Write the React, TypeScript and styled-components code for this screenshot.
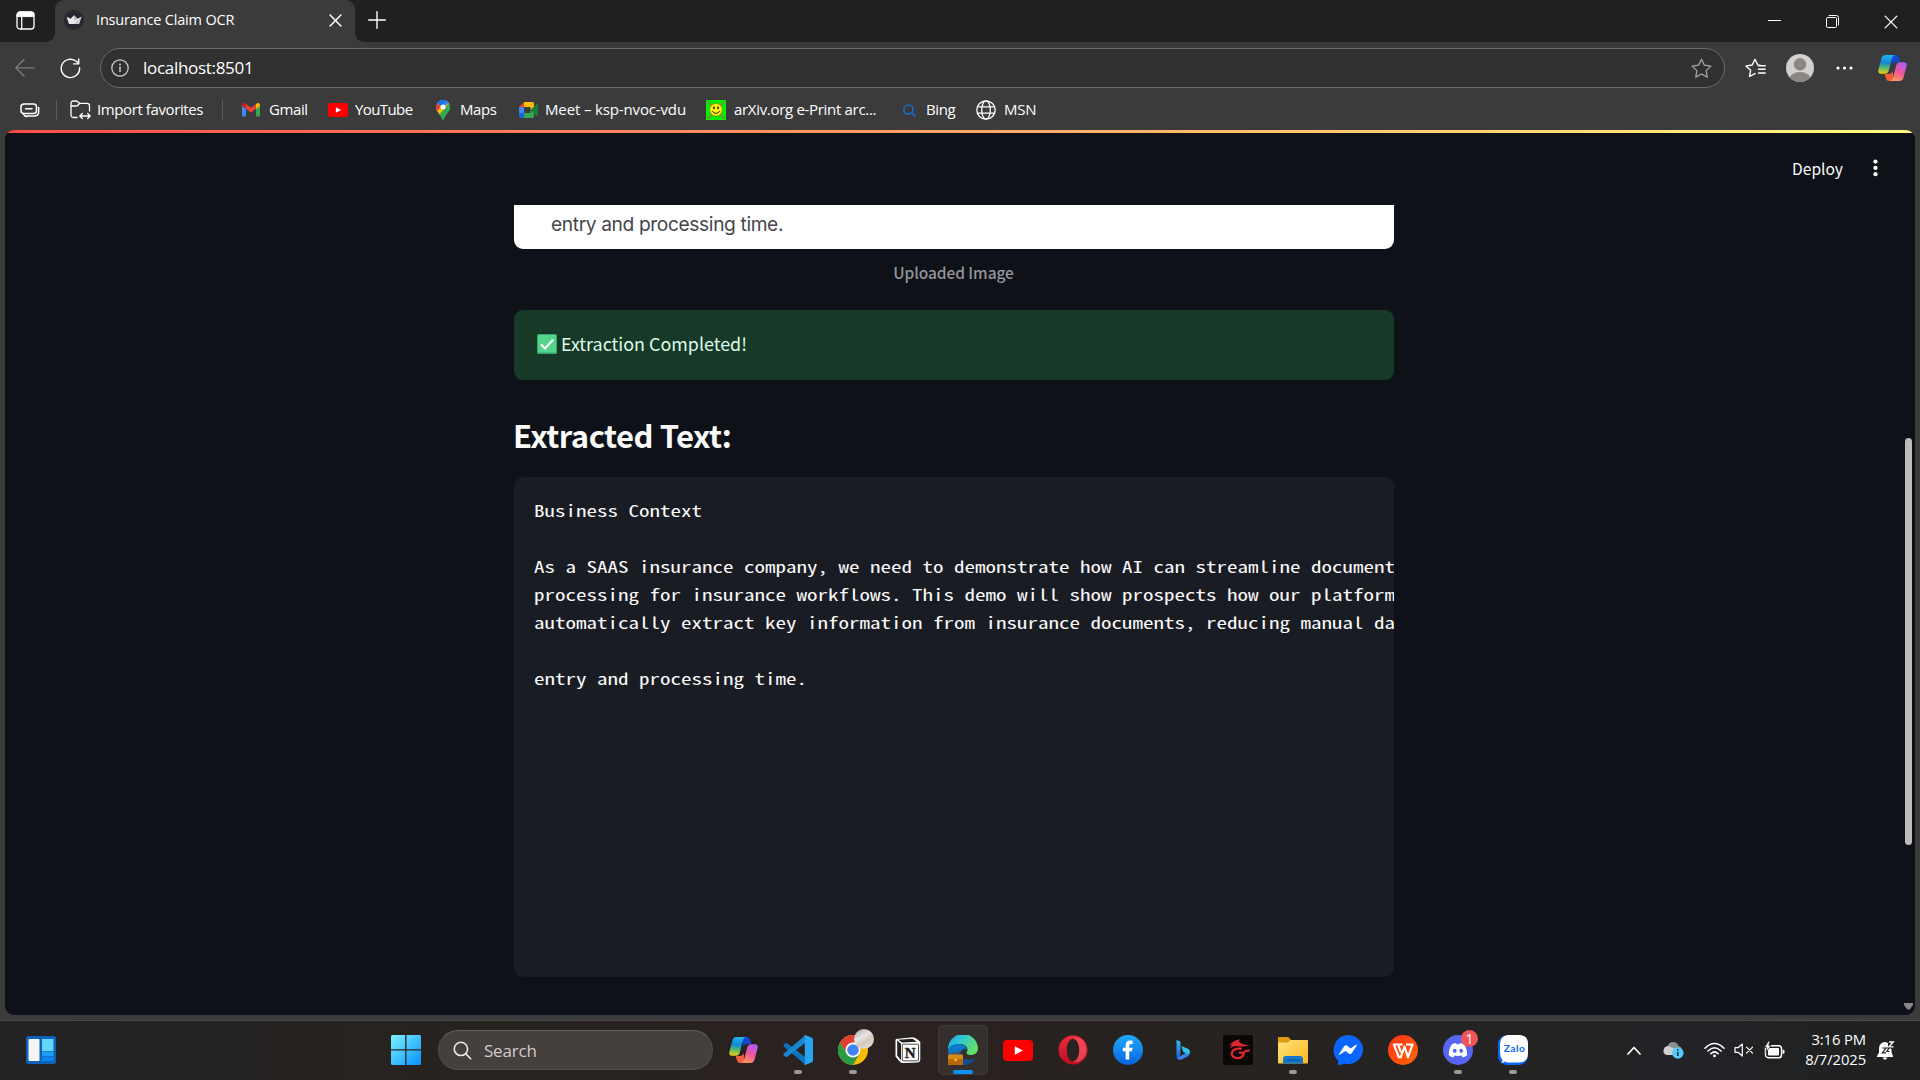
import React from 'react';
import styled, { createGlobalStyle, css } from 'styled-components';

const ui = `"Open Sans", "Noto Sans", sans-serif`;
const sourceSans = `"Noto Sans CJK JP", "Open Sans", sans-serif`;
const sourceCode = `"Noto Sans Mono CJK JP", "DejaVu Sans Mono", monospace`;

const Global = createGlobalStyle`
  * { box-sizing: border-box; }
  html, body { margin: 0; padding: 0; background: #3b3b3b; overflow: hidden; }
  svg { display: block; flex: none; }
`;

const Screen = styled.div`
  width: 1920px;
  height: 1080px;
  display: flex;
  flex-direction: column;
  background: #3b3b3b;
  color: #fff;
  font-family: ${ui};
  overflow: hidden;
`;

/* ---------- text ---------- */
const Label = styled.span<{ $size?: number; $track?: number; $color?: string }>`
  font-size: ${p => p.$size ?? 15}px;
  letter-spacing: ${p => p.$track ?? 0}px;
  color: ${p => p.$color ?? '#fff'};
  line-height: 20px;
  white-space: nowrap;
`;

/* ---------- tab strip ---------- */
const TabStrip = styled.div`
  height: 42px;
  display: flex;
  flex: none;
`;
const StripLeft = styled.div`
  width: 55px;
  background: #202020;
  border-bottom-right-radius: 9px;
  padding: 11px 0 0 15.5px;
`;
const TabSlot = styled.div`
  width: 300px;
  background: linear-gradient(#202020 50%, #3b3b3b 50%);
`;
const Tab = styled.div`
  height: 42px;
  background: #3b3b3b;
  border-radius: 9px 9px 0 0;
  display: flex;
  align-items: center;
  padding: 0 13px 2px 9px;
`;
const TabTitle = styled(Label)`
  margin-left: 12px;
  flex: 1;
`;
const StripRight = styled.div`
  flex: 1;
  background: #202020;
  border-bottom-left-radius: 9px;
  display: flex;
  justify-content: space-between;
  padding: 11px 22px 0 13px;
`;
const WindowControls = styled.div`
  display: flex;
  gap: 45px;
  padding-top: 4px;
`;

/* ---------- toolbar ---------- */
const Toolbar = styled.div`
  height: 53px;
  flex: none;
  display: flex;
  align-items: center;
  padding: 0 12px 1px 15px;
`;
const NavIcons = styled.div`
  display: flex;
  gap: 24.5px;
  width: 85px;
`;
const AddressBar = styled.div`
  width: 1625px;
  height: 40px;
  border: 1px solid #6b6b6b;
  border-radius: 20px;
  background: #313131;
  display: flex;
  align-items: center;
  padding: 0 12px 0 10px;
`;
const Url = styled(Label)`
  flex: 1;
  margin-left: 14px;
`;
const ToolIcons = styled.div`
  display: flex;
  align-items: center;
  padding-left: 19.5px;
`;
const ToolSlot = styled.div<{ $w: number }>`
  width: ${p => p.$w}px;
`;

/* ---------- favorites ---------- */
const Favorites = styled.div`
  height: 35px;
  flex: none;
  display: flex;
  align-items: center;
  padding: 0 0 5px 20px;
`;
const Favorite = styled.div<{ $w: number; $gap: number }>`
  width: ${p => p.$w}px;
  display: flex;
  align-items: center;
  gap: ${p => p.$gap}px;
  flex: none;

  ${Label} {
    padding-bottom: 2px;
    line-height: 18px;
  }
`;
const Divider = styled.div<{ $after: number }>`
  width: 1px;
  height: 20px;
  background: #5c5c5c;
  margin-right: ${p => p.$after}px;
`;

/* ---------- page ---------- */
const PageFrame = styled.div`
  height: 891px;
  flex: none;
  padding: 0 5px 6px;
  border-bottom: 1px solid #4a4a4a;
`;
const Page = styled.div`
  height: 885px;
  background: #0e1117;
  border-radius: 9px;
  overflow: hidden;
  display: flex;
  flex-direction: column;
  font-family: ${sourceSans};
`;
const Decoration = styled.div`
  height: 3px;
  flex: none;
  background: linear-gradient(90deg, #ff4b4b, #fffd80);
`;
const PageHeader = styled.div`
  height: 72px;
  flex: none;
  display: flex;
  justify-content: flex-end;
  align-items: center;
  gap: 30px;
  padding: 0 37px 2px 0;
`;
const Deploy = styled.span`
  font-size: 15.6px;
  line-height: 20px;
  color: #fafafa;
`;
const PageBody = styled.div`
  flex: 1;
  display: flex;
  min-height: 0;
`;
const Column = styled.main`
  width: 880px;
  margin-left: 509px;
  display: flex;
  flex-direction: column;
`;
const ImageCard = styled.div`
  height: 44px;
  flex: none;
  background: #fff;
  border-radius: 0 0 9px 9px;
  padding: 6px 0 0 37px;
  font: 19.2px/26px Inter, sans-serif;
  letter-spacing: -0.38px;
  color: #44464b;
`;
const Caption = styled.div`
  margin-top: 10px;
  padding-right: 1px;
  text-align: center;
  font-size: 15.5px;
  line-height: 26px;
  font-weight: 500;
  letter-spacing: -0.06px;
  color: #94969a;
`;
const Success = styled.div`
  margin-top: 25px;
  height: 70px;
  flex: none;
  border-radius: 9px;
  background: #173928;
  color: #dffde9;
  display: flex;
  align-items: center;
  gap: 4px;
  padding: 0 23px 2px;
  font-size: 17.9px;
  line-height: 24px;

  span { padding-bottom: 2px; }
`;
const Heading = styled.h3`
  margin: 34px 0 0 -1px;
  font-size: 31px;
  line-height: 42px;
  letter-spacing: -0.48px;
  font-weight: 700;
  color: #fafafa;
`;
const CodeBlock = styled.pre`
  margin: 21px 0 0;
  height: 500px;
  flex: none;
  padding: 19px 0 0 19.5px;
  border-radius: 9px;
  background: #1a1c24;
  color: #fafafa;
  overflow: hidden;
`;
const Code = styled.code`
  display: block;
  width: 660px;
  font-family: ${sourceCode};
  font-size: 16px;
  line-height: 28px;
  transform: scaleX(1.3125);
  transform-origin: 0 0;
`;
const ScrollRail = styled.div`
  margin-left: auto;
  width: 11px;
  display: flex;
  flex-direction: column;
  justify-content: space-between;
  padding: 233px 0 5px;
`;
const ScrollThumb = styled.div`
  margin-left: 1px;
  width: 7px;
  height: 407px;
  border-radius: 4px;
  background: #bbbbbb;
`;

/* ---------- taskbar ---------- */
const Taskbar = styled.div`
  height: 59px;
  flex: none;
  display: flex;
  align-items: center;
  padding-bottom: 1px;
  background: linear-gradient(90deg, #222223 0, #27231f 25%, #2a2220 45%, #27221f 60%, #242322 75%, #212326 88%, #202020 100%);
`;
const WidgetSlot = styled.div`
  width: 391px;
  padding-left: 26px;
`;
const SearchBox = styled.div`
  margin-left: 17px;
  width: 275px;
  height: 40px;
  border-radius: 20px;
  background: #45403d;
  border: 1px solid #514c49;
  border-top-color: #65605d;
  display: flex;
  align-items: center;
  gap: 12px;
  padding-left: 14px;

  ${Label} { padding-top: 1px; }
`;
const AppRow = styled.div`
  display: flex;
  gap: 5px;
  margin-left: 5px;
`;
const AppCell = styled.div<{ $active?: boolean }>`
  position: relative;
  width: 50px;
  height: 50px;
  border-radius: 5px;
  display: flex;
  align-items: center;
  justify-content: center;
  ${p => p.$active && css`
    background: #35302e;
    box-shadow: inset 0 0 0 1px #403b38;
  `}
`;
const Indicator = styled.i<{ $active?: boolean }>`
  position: absolute;
  bottom: 1px;
  left: 50%;
  transform: translateX(-50%);
  width: ${p => (p.$active ? 20 : 8)}px;
  height: 4px;
  border-radius: 2px;
  background: ${p => (p.$active ? '#0a91ff' : '#9c9997')};
`;
const Badge = styled.span<{ $photo?: boolean }>`
  position: absolute;
  top: ${p => (p.$photo ? 4 : 5)}px;
  right: ${p => (p.$photo ? 4 : 5)}px;
  width: ${p => (p.$photo ? 20 : 17)}px;
  height: ${p => (p.$photo ? 20 : 17)}px;
  border-radius: 50%;
  background: ${p => (p.$photo ? 'linear-gradient(150deg,#9fa5aa,#e8e6e3 40%,#d3c8bb 60%,#e2e5e7)' : '#ee5458')};
  font-size: 14px;
  line-height: 17px;
  text-align: center;
`;
const Tray = styled.div`
  margin-left: auto;
  display: flex;
  align-items: center;
  padding-right: 25px;
`;
const TraySlot = styled.div<{ $w: number }>`
  width: ${p => p.$w}px;
  display: flex;
  justify-content: center;
`;
const Clock = styled.div`
  width: 76px;
  display: flex;
  flex-direction: column;
  align-items: flex-end;
  margin-right: 11px;
  padding-bottom: 2px;
`;

/* ---------- icons ---------- */
const stroke = { fill: 'none', stroke: '#fff', strokeLinecap: 'round' as const, strokeLinejoin: 'round' as const };

const TabActions = () => (
  <svg width="19" height="19" viewBox="0 0 19 19" {...stroke} strokeWidth="1.3">
    <rect x="1" y="1" width="17" height="17" rx="3" /><path d="M1 5.200V4Q1 1 4 1h11q3 0 3 3v1.200Z" fill="#fff" strokeWidth="1" /><path d="M5.700 5v13" />
  </svg>
);
const Crown = () => (
  <svg width="20" height="20" viewBox="0 0 20 20">
    <circle cx="10" cy="10" r="10" fill="#262730" />
    <path d="M2.600 6.800 6.600 8.800 10 5.200l3.400 3.600 4-2-2.400 7.200H5Z" fill="#e9e9e9" />
    <path d="m10 5.200 3.400 3.600L10 11Z" fill="#bdbdbd" /><path d="m17.400 6.800-2.400 7.200h-5Z" fill="#cfcfcf" />
  </svg>
);
const Cross = ({ s, w = 1.4 }: { s: number; w?: number }) => (
  <svg width={s} height={s} viewBox="0 0 12 12" {...stroke} strokeWidth={w}><path d="m1 1 10 10M11 1 1 11" /></svg>
);
const Plus = () => <svg width="18" height="18" viewBox="0 0 18 18" {...stroke} strokeWidth="1.4"><path d="M9 0.7v16.6M.7 9h16.6" /></svg>;
const Minimize = () => <svg width="13" height="13" viewBox="0 0 13 13"><path d="M0 5.500h13" stroke="#fff" strokeWidth="1" /></svg>;
const Restore = () => (
  <svg width="13" height="13" viewBox="0 0 13 13" {...stroke} strokeWidth="1"><rect x=".5" y="2.500" width="10" height="10" rx="1" /><path d="M3 .5h7.500q2 0 2 2V10" /></svg>
);
const Back = () => <svg width="20" height="20" viewBox="0 0 20 20" {...stroke} stroke="#7d7d7d" strokeWidth="1.3"><path d="M19.3 9.8H.8M9 1.5.8 9.8 9 18" /></svg>;
const Reload = () => (
  <svg width="21" height="21" viewBox="0 0 21 21" {...stroke} strokeWidth="1.4"><path d="M19.6 9.800a9.200 9.200 0 1 1-3-6.200l2 1.800M18.700 1v4.900h-5" /></svg>
);
const Info = () => (
  <svg width="18" height="18" viewBox="0 0 18 18" {...stroke} stroke="#d0d0d0" strokeWidth="1.2"><circle cx="9" cy="9" r="8.2" /><path d="M9 8.3v4.3" strokeWidth="1.5" /><circle cx="9" cy="5.6" r=".4" /></svg>
);
const starPath = 'm10 1.2 2.7 5.6 6.2.9-4.5 4.3 1.1 6.2L10 15.3l-5.5 2.9 1.1-6.2L1.1 7.7l6.2-.9Z';
const Star = () => <svg width="21" height="21" viewBox="0 0 20 20" {...stroke} stroke="#a5a5a5" strokeWidth="1.2"><path d={starPath} /></svg>;
const FavoritesIcon = () => (
  <svg width="21" height="20" viewBox="0 0 21 20" {...stroke} strokeWidth="1.400">
    <path d="m10 15.600-5.500 2.900 1.100-6.200L1 7.900l6.200-.9L10 1.300 12.800 7l2.700.4M13.500 7.700h6.700M13.500 11.300h6.700M13.500 15h6.700" />
  </svg>
);
const Avatar = () => (
  <svg width="28" height="28" viewBox="0 0 28 28"><defs><clipPath id="av"><circle cx="14" cy="14" r="14" /></clipPath></defs>
    <g clipPath="url(#av)"><rect width="28" height="28" fill="#d2d0ce" /><circle cx="14" cy="10.3" r="6.2" fill="#8a8683" /><ellipse cx="14" cy="26" rx="11" ry="8" fill="#8a8683" /></g></svg>
);
const Dots = () => <svg width="17" height="4" viewBox="0 0 17 4" fill="#fff"><circle cx="2" cy="2" r="1.6" /><circle cx="8.5" cy="2" r="1.6" /><circle cx="15" cy="2" r="1.6" /></svg>;
const Copilot = ({ id }: { id: string }) => (
  <svg width="29" height="26" viewBox="0 0 29 26">
    <defs>
      <linearGradient id={id + 'a'} x1=".4" y1="0" x2=".3" y2="1"><stop stopColor="#22b3f0" /><stop offset=".4" stopColor="#1387d8" /><stop offset=".65" stopColor="#4bb774" /><stop offset="1" stopColor="#f4cf12" /></linearGradient>
      <linearGradient id={id + 'b'} x1=".7" y1="0" x2=".3" y2="1"><stop stopColor="#b05bf5" /><stop offset=".5" stopColor="#ee559c" /><stop offset="1" stopColor="#fb9a5c" /></linearGradient>
    </defs>
    <path d="M13 0h5q2.300 0 3 2.500L22.300 7H18q-2.500 0-3.500 3Z" fill="#1647d0" />
    <path d="M16 26h-5q-2.300 0-3-2.500L6.700 19H11q2.500 0 3.500-3Z" fill="#f2603c" />
    <path d="M7.500 0H17q-2.300.3-3 3l-3.200 12.500q-.9 3.300-4 3.300H3.200Q-.7 18.800.5 14.500L3.500 3.200Q4.500 0 7.500 0Z" fill={`url(#${id}a)`} />
    <path d="M21.500 26H12q2.300-.3 3-3l3.200-12.500q.9-3.300 4-3.300h3.600q3.900 0 2.700 4.300l-3 11.300Q24.500 26 21.500 26Z" fill={`url(#${id}b)`} />
  </svg>
);
const Stack = () => (
  <svg width="20" height="15" viewBox="0 0 20 15" {...stroke} strokeWidth="1.5"><rect x="1" y="1" width="15.500" height="9.500" rx="3" /><path d="M5.500 5.800h6.500M18.700 4.500v4q0 4.600-4.600 4.600H5M3.500 11.200Q4.500 13.500 7 13.500" /></svg>
);
const ImportFolder = () => (
  <svg width="21" height="20" viewBox="0 0 21 20" {...stroke} strokeWidth="1.3"><path d="M7 17.500H3.500Q1 17.500 1 15V3.500Q1 1 3.500 1H6q1 0 1.700.7L9.500 3.300H17q2.500 0 2.500 2.500V11M1 6h5.300q1 0 1.700-.8L9.700 3.300M10 16h10M12.300 13.500 9.800 16l2.500 2.500M17.700 13.500l2.500 2.500-2.500 2.500" /></svg>
);
const Gmail = () => (
  <svg width="18" height="14" viewBox="0 0 18 14"><path d="M0 2.500 4 5.500V13.500H1.300Q0 13.500 0 12.200Z" fill="#4285f4" /><path d="M18 2.500 14 5.500v8h2.700q1.300 0 1.300-1.300Z" fill="#34a853" /><path d="M4 1 9 4.800 14 1v4.800L9 9.600 4 5.800Z" fill="#ea4335" /><path d="M0 3V2Q.4-.8 3 .3L4 1v5Z" fill="#c5221f" /><path d="M18 3V2Q17.600-.8 15 .3L14 1v5Z" fill="#fbbc04" /></svg>
);
const YouTube = ({ w }: { w: number }) => (
  <svg width={w} height={w * 0.7} viewBox="0 0 30 21"><rect width="30" height="21" rx="4" fill="#f00" /><path d="m11.800 6.200 8 4.300-8 4.300Z" fill="#fff" /></svg>
);
const MapsPin = () => (
  <svg width="14" height="20" viewBox="0 0 14 20"><defs><clipPath id="pin"><path d="M7 0a7 7 0 0 1 7 7c0 5-4.500 6.500-6.200 12.300q-.8 1.400-1.600 0C4.500 13.500 0 12 0 7a7 7 0 0 1 7-7Z" /></clipPath></defs>
    <g clipPath="url(#pin)"><rect width="14" height="20" fill="#34a853" /><path d="M0 0h14L4 12Z" fill="#4285f4" /><path d="M11 0h3v4L3 17-2 10Z" fill="#fbbc04" /><path d="M9 0h5v2L8 7 4 4Z" fill="#4285f4" /><path d="M0 2.500 5 6.500 1.500 11-2 8Z" fill="#ea4335" /><path d="M14 2v18H5l-2-5Z" fill="#34a853" /><path d="M1 2 4 0h7.500L5 6.500Z" fill="#1a73e8" /></g><circle cx="7" cy="7" r="2.500" fill="#fff" /></svg>
);
const Meet = () => (
  <svg width="19" height="16" viewBox="0 0 19 16"><path d="M0 5 5 0v5Z" fill="#ea4335" /><path d="M5 0h8.500q1.500 0 1.500 1.500V5l-3.500 3V5H5Z" fill="#fbbc04" /><path d="M0 5h5v6H0Z" fill="#4285f4" /><path d="M0 11h5v5H1.500Q0 16 0 14.500Z" fill="#1967d2" /><path d="M5 11h6.500V8L15 5v9.500q0 1.500-1.500 1.500H5Z" fill="#34a853" /><path d="m11.500 8 6-5.500Q19 1.500 19 3v10q0 1.500-1.500.500Z" fill="#188038" /></svg>
);
const Arxiv = () => (
  <svg width="20" height="20" viewBox="0 0 20 20"><rect width="20" height="20" fill="#00f000" /><path d="m1.500 1.500 17 17M18.500 1.500l-17 17" stroke="#8d7a4a" strokeWidth="2.200" strokeDasharray="2.500 1" /><circle cx="10" cy="9.800" r="6.300" fill="#ffee10" stroke="#8a7a00" strokeWidth=".7" /><ellipse cx="8" cy="7.800" rx=".8" ry="1.400" /><ellipse cx="12" cy="7.800" rx=".8" ry="1.400" /><path d="M6.200 11.200q3.800 4.400 7.600 0" fill="none" stroke="#222" /></svg>
);
const Lens = ({ s, c, w }: { s: number; c: string; w: number }) => (
  <svg width={s} height={s} viewBox="0 0 18 18" {...stroke} stroke={c} strokeWidth={w}><circle cx="7.500" cy="7.500" r="6.300" /><path d="m12.200 12.200 4.600 4.600" /></svg>
);
const Globe = () => (
  <svg width="20" height="20" viewBox="0 0 20 20" {...stroke} strokeWidth="1.300"><circle cx="10" cy="10" r="9.200" /><ellipse cx="10" cy="10" rx="4.300" ry="9.200" /><path d="M1.500 6.800h17M1.500 13.200h17" /></svg>
);
const Kebab = () => <svg width="5" height="18" viewBox="0 0 5 18" fill="#fafafa"><circle cx="2.500" cy="2.600" r="2.150" /><circle cx="2.500" cy="8.900" r="2.150" /><circle cx="2.500" cy="15.200" r="2.150" /></svg>;
const CheckEmoji = () => (
  <svg width="20" height="20" viewBox="0 0 20 20"><rect width="20" height="20" rx="1.500" fill="#3aa66c" /><rect x="1" y="1" width="18" height="17.500" rx="1" fill="#55d48b" /><path d="m4 10.200 4 4.200 8-8.600" fill="none" stroke="#fff" strokeWidth="2.200" /></svg>
);
const ScrollDown = () => <svg width="9" height="7" viewBox="0 0 9 7" fill="#87888b"><path d="M0 0h9v2L5.700 6.500H3.300L0 2Z" /></svg>;

const Widgets = () => (
  <svg width="30" height="28" viewBox="0 0 30 28"><rect width="30" height="28" rx="2.500" fill="#0f62b3" /><rect x="2.500" y="3" width="11" height="22" rx="1" fill="#f4f4f4" /><rect x="16" y="3" width="11.500" height="12" fill="#62d5fb" /><rect x="16" y="15.500" width="11.500" height="4.500" fill="#1c9ef5" /><rect x="16" y="20.500" width="11.500" height="4.500" fill="#0a84f0" /></svg>
);
const Windows = () => (
  <svg width="30" height="30" viewBox="0 0 30 30"><defs><linearGradient id="win" x1="0" y1="0" x2="30" y2="30" gradientUnits="userSpaceOnUse"><stop stopColor="#7df3ff" /><stop offset="1" stopColor="#0690ff" /></linearGradient></defs><path d="M1.500 0h12.700v14.200H0V1.500Q0 0 1.500 0ZM15.500 0h13Q30 0 30 1.500v12.700H15.500ZM0 15.500h14.200V30H1.500Q0 30 0 28.500ZM15.500 15.500H30v13q0 1.500-1.500 1.500h-13Z" fill="url(#win)" /></svg>
);
const VsCode = () => (
  <svg width="30" height="30" viewBox="0 0 30 30"><path d="M.6 9.800 2.500 8.200q.9-.6 1.700 0L22 22v7.500L.8 11.600Q0 10.700.6 9.800Z" fill="#0b74bd" /><path d="M.6 20.200l1.900 1.600q.9.600 1.700 0L22 8V.500L.8 18.400q-.8.900-.2 1.800Z" fill="#1788cf" /><path d="M22 0l7 2.800q1 .5 1 1.600v21.200q0 1.100-1 1.600L22 30q-1-.3-.2-1.200V1.200Q21-.1 22 0Z" fill="#27a4f2" /></svg>
);
const Chrome = () => (
  <svg width="30" height="30" viewBox="0 0 30 30"><circle cx="15" cy="15" r="15" fill="#fbbc05" /><path d="M2 7.500A15 15 0 0 1 28 7.500H15L9 18.500Z" fill="#e0402f" /><path d="M2 7.500A15 15 0 0 0 15 30l6.500-11.300L9 18.700Z" fill="#2b9a47" /><circle cx="15" cy="15" r="7.500" fill="#fff" /><circle cx="15" cy="15" r="5.800" fill="#4183f2" /></svg>
);
const NotionN = styled.text`
  font: bold 15px "Liberation Serif", serif;
`;
const Notion = () => (
  <svg width="26" height="26" viewBox="0 0 26 26"><path d="M1 2.500 17.500.8l3 .8 4.300 3.200V23q0 1.800-2 2L7.500 25.500q-1.500.1-2.300-.9L1 19.500Z" fill="#fff" stroke="#fff" strokeLinejoin="round" /><path d="M2.200 3.500 6 6.800v16.500L2.200 18.600ZM3.300 2.800 17.500 1.800l4.300 2.900L7 5.500Z" fill="#24211f" /><rect x="7.300" y="7.200" width="16.200" height="16.600" rx=".8" fill="#fff" stroke="#24211f" strokeWidth=".8" /><NotionN x="9.700" y="20.800" fill="#1d1b1a" stroke="#1d1b1a" strokeWidth=".4">N</NotionN></svg>
);
const Edge = () => (
  <svg width="30" height="30" viewBox="0 0 30 30"><defs><linearGradient id="eg" x1="0" y1="0" x2="1" y2=".5"><stop stopColor="#1ea6e4" /><stop offset=".45" stopColor="#2cc8d2" /><stop offset="1" stopColor="#62e06c" /></linearGradient></defs>
    <path d="M0 15A15 15 0 0 1 30 13c0 5-3.500 7-7.500 7-3 0-4.800-1.200-3.500-3.200C21 13 17 9 12 9 6 9 1 11.500 0 15Z" fill="url(#eg)" /><path d="M0 15c1-4 5.500-6.500 11-6 4.500.4 7.500 3 7.800 6-1.500-1.500-4-1.700-5.600.7-3 4.500 1.800 13.500 11 9.800A15 15 0 0 1 0 15Z" fill="#0d78cc" /><path d="M13.200 15.700c-2.500 5 2.500 12.500 14.300 7.500A15 15 0 0 1 14 30c-5-3-5-11-.8-14.300Z" fill="#114f93" />
    <path d="M4 19.500V18h7v1.500" fill="none" stroke="#744016" strokeWidth="1.200" /><rect y="19.500" width="15" height="10.500" rx=".8" fill="#d88715" /><path d="M0 24h15v6H0Z" fill="#b8660d" /><rect x="6.600" y="24" width="2" height="2" fill="#ffe04a" /></svg>
);
const Opera = () => (
  <svg width="30" height="30" viewBox="0 0 30 30"><defs><linearGradient id="op" x1="0" y1="0" x2="0" y2="1"><stop stopColor="#f22a3c" /><stop offset="1" stopColor="#ba0e22" /></linearGradient></defs><path fillRule="evenodd" d="M15 .5a14.500 14.500 0 1 1 0 29 14.500 14.500 0 0 1 0-29Zm0 3.200c-3.800 0-6.200 5-6.200 11.300S11.200 26.300 15 26.300s6.200-5 6.200-11.300S18.800 3.700 15 3.700Z" fill="url(#op)" /><path d="M15 3.700c8.300 0 8.300 22.600 0 22.600 3 1.500 7 .5 9.800-2.300A14.500 14.500 0 0 0 24.600 5C21.500 2.300 18 2 15 3.700Z" fill="#f2525d" opacity=".75" /></svg>
);
const Facebook = () => (
  <svg width="30" height="30" viewBox="0 0 30 30"><defs><linearGradient id="fb" x1="0" y1="0" x2="0" y2="1"><stop stopColor="#1ea9fb" /><stop offset="1" stopColor="#0a63e0" /></linearGradient></defs><circle cx="15" cy="15" r="15" fill="url(#fb)" /><path d="M12.600 24.500v-8.200H9.800v-3.500h2.800v-2.300c0-3.200 1.700-5 4.800-5 1.300 0 2.300.2 2.300.2v3.200h-1.500c-1.600 0-2 .9-2 2v1.900h3.400l-.6 3.500h-2.800v8.200Z" fill="#fff" /></svg>
);
const Bing = () => (
  <svg width="14" height="20" viewBox="0 0 14 20"><defs><linearGradient id="bi" x1="0" y1="0" x2="0" y2="1"><stop stopColor="#2fc1f3" /><stop offset="1" stopColor="#1d55d8" /></linearGradient></defs><path d="M.5 0 4.500 1.500v12.800L3 19.200Q.5 18.500.5 16Z" fill="url(#bi)" /><path d="m5.500 6 7 3q2.300 1.800 1 5l-4.500 2 .5-3-2.400-1.300Z" fill="#2bc3e8" /><path d="M1 18.200 9.300 13.300l4.200.7q-.5 1.500-2 2.400L5.500 19.500q-3 .8-4.500-1.300Z" fill="#3a80f0" /></svg>
);
const Garena = () => (
  <svg width="30" height="30" viewBox="0 0 30 30"><rect width="30" height="30" rx="2.500" fill="#0a0707" />
    <path d="M4 9q2.500 1.300 4.700-.8Q12.500 4.300 17.500 4.500q-2.200 1.300-1.200 2.700 3 2.300 10.700 3.300-8 1.800-14 .5-3.500.2-6 2.200.3-2.300 2.500-3.300Q6.500 10.200 4 9Z" fill="#e0262e" />
    <path d="M19 13.700q-9.500-1-10.300 4.800.2 4.300 6 4.600 5.300 0 6.300-5.400h-5.200M21 16.500l5.500-1.200" fill="none" stroke="#e0262e" strokeWidth="2.300" strokeLinejoin="round" /></svg>
);
const Explorer = () => (
  <svg width="30" height="28" viewBox="0 0 30 28"><defs><linearGradient id="ex" x1="0" y1="0" x2="1" y2="1"><stop stopColor="#ffe27c" /><stop offset="1" stopColor="#fbb91d" /></linearGradient></defs><path d="M0 8V2Q0 1 1 1h8.500q.8 0 1.300.6L13 4h16q1 0 1 1v3Z" fill="#dc9b0d" /><path d="M0 6.500h9.500L12.500 4H29q1 0 1 1v21.500q0 1-1 1H1q-1 0-1-1Z" fill="url(#ex)" /><path d="M5 27.500V23q0-3 3-3h14q3 0 3 3v4.500Z" fill="#1479c9" /><path d="M8.500 24h13" stroke="#0c4f92" strokeWidth="1.200" /></svg>
);
const Messenger = () => (
  <svg width="30" height="30" viewBox="0 0 30 30"><path d="M15 0a15 14.500 0 1 1-3 28.700L6.500 30q-1.500.4-1.500-1.200V25.500A15 15 0 0 1 15 0Z" fill="#0a66ff" /><path d="m6.200 18.700 5-7.500q1.300-1.800 3-.4l3.400 2.600 5.300-3.600q1.500-.5.900.8l-5 7.500q-1.300 1.800-3 .4l-3.400-2.600-5.300 3.600q-1.500.5-.9-.8Z" fill="#fff" /></svg>
);
const Wps = () => (
  <svg width="30" height="30" viewBox="0 0 30 30"><defs><linearGradient id="wp" x1="0" y1="0" x2="1" y2="1"><stop stopColor="#ff3418" /><stop offset="1" stopColor="#ff6508" /></linearGradient></defs><circle cx="15" cy="15" r="15" fill="url(#wp)" /><path d="M14.500 9.500H5.800l5 12.700h2L16.500 11.500l3.500 10.700L24.500 9.500h-6.500M10 9.500l3 8" fill="none" stroke="#fff" strokeWidth="2.100" strokeLinejoin="round" /></svg>
);
const Discord = () => (
  <svg width="30" height="30" viewBox="0 0 30 30"><circle cx="15" cy="15" r="15" fill="#5765f2" /><path d="M9 9.200q2-1 4-1.200l.7 1.200h2.600L17 8q2 .2 4 1.200 3.500 5.300 3.200 11-2.200 1.700-4.600 2.200l-1.100-1.900q-3.500.8-7 0l-1.100 1.900Q8 21.900 5.800 20.200 5.300 14.500 9 9.200Z" fill="#fff" /><ellipse cx="11.800" cy="15.800" rx="1.900" ry="2.100" fill="#5765f2" /><ellipse cx="18.200" cy="15.800" rx="1.900" ry="2.100" fill="#5765f2" /></svg>
);
const ZaloText = styled.text`
  font: bold 10.300px Lato, sans-serif;
`;
const Zalo = () => (
  <svg width="30" height="30" viewBox="0 0 30 30"><rect width="30" height="30" rx="9" fill="#0a68f5" /><path d="M10 0H21Q30 0 30 9V18q0 9.500-9 9.500H13Q9 28 7 26.500q-2 1.500-4 1.300Q5 26.500 4.500 25 2 22 2 17V9Q2 1 10 0Z" fill="#fff" /><ZaloText x="5.800" y="17.300" fill="#0a68f5" textLength="21">Zalo</ZaloText></svg>
);

const Chevron = () => <svg width="14" height="9" viewBox="0 0 14 9" {...stroke} strokeWidth="1.700"><path d="m1 8 6-6.500L13 8" /></svg>;
const CloudInfo = () => (
  <svg width="21" height="18" viewBox="0 0 21 18"><path d="M5 4Q7 .3 11 1q3.500.7 4.500 4Q19 6 19 9l-8 5H4Q0 13.500.3 9.500.8 6 5 5Z" fill="#8c8c8c" /><path d="M1 11.500Q-.2 5.500 5.500 5L15 9v5H4Q1.800 13.500 1 11.500Z" fill="#d0d0d0" /><circle cx="14.800" cy="12" r="5.800" fill="#56c8fa" /><path d="M14.800 11v4M14.800 8.300v1.500" stroke="#12303f" strokeWidth="1.600" /></svg>
);
const Wifi = () => <svg width="21" height="16" viewBox="0 0 21 16" {...stroke} strokeWidth="1.500"><path d="M1 6.200q9.500-9.500 19 0M3.900 9q6.600-6.500 13.200 0M6.800 11.700q3.700-3.600 7.400 0" /><circle cx="10.500" cy="13.700" r="1.500" fill="#fff" stroke="none" /></svg>;
const Mute = () => <svg width="20" height="14" viewBox="0 0 20 14" {...stroke} strokeWidth="1.200"><path d="M1 4.700v4.600h3L8.300 13V1L4 4.700ZM12.500 4.200l6 6M18.500 4.200l-6 6" /></svg>;
const Battery = () => (
  <svg width="21" height="18" viewBox="0 0 21 18"><rect x="1.500" y="4.700" width="16" height="12" rx="2.800" fill="none" stroke="#fff" strokeWidth="1.400" /><path d="M18.500 8.700h1q1 0 1 1v2q0 1-1 1h-1Z" fill="#fff" /><rect x="4" y="7" width="11" height="7.500" rx="1" fill="#fff" /><path d="M4.500 0 .5 6.500h2.200L2 11.300l5-6.800H4.800L5.800 0Z" fill="#fff" stroke="#222" strokeWidth=".7" /></svg>
);
const Bell = () => (
  <svg width="18" height="19" viewBox="0 0 18 19"><path d="M8 1Q2.200 1.500 2 7.500v4L0 15v1h16v-1l-1.500-3.500V8L11 2ZM5.500 16.500q2.500 4.500 5 0Z" fill="#fff" /><path d="M11 0h7v7.500h-5L11 5Z" fill="#212121" /><path d="M12 1h4.300L12 5.800h4.500" fill="none" stroke="#fff" strokeWidth="1.300" /><path d="M5.300 7H9l-3.700 4.800H9M9.800 7h2.500l-2.500 3.500h2.700" fill="none" stroke="#222" strokeWidth="1.200" /></svg>
);

const apps: { icon: React.ReactNode; running?: boolean; active?: boolean; badge?: React.ReactNode }[] = [
  { icon: <Copilot id="tb" /> },
  { icon: <VsCode />, running: true },
  { icon: <Chrome />, running: true, badge: <Badge $photo /> },
  { icon: <Notion /> },
  { icon: <Edge />, active: true },
  { icon: <YouTube w={30} /> },
  { icon: <Opera /> },
  { icon: <Facebook /> },
  { icon: <Bing /> },
  { icon: <Garena /> },
  { icon: <Explorer />, running: true },
  { icon: <Messenger /> },
  { icon: <Wps /> },
  { icon: <Discord />, running: true, badge: <Badge>1</Badge> },
  { icon: <Zalo />, running: true },
];

const extracted = `Business Context

As a SAAS insurance company, we need to demonstrate how AI can streamline document
processing for insurance workflows. This demo will show prospects how our platform
automatically extract key information from insurance documents, reducing manual da

entry and processing time.`;

export default function App() {
  return (
    <Screen>
      <Global />
      <TabStrip>
        <StripLeft><TabActions /></StripLeft>
        <TabSlot>
          <Tab><Crown /><TabTitle $size={14.5} $track={-0.17}>Insurance Claim OCR</TabTitle><Cross s={13} /></Tab>
        </TabSlot>
        <StripRight>
          <Plus />
          <WindowControls><Minimize /><Restore /><Cross s={14} w={1.1} /></WindowControls>
        </StripRight>
      </TabStrip>

      <Toolbar>
        <NavIcons><Back /><Reload /></NavIcons>
        <AddressBar><Info /><Url $size={17} $track={-0.3}>localhost:8501</Url><Star /></AddressBar>
        <ToolIcons>
          <ToolSlot $w={41}><FavoritesIcon /></ToolSlot>
          <ToolSlot $w={50.5}><Avatar /></ToolSlot>
          <ToolSlot $w={42}><Dots /></ToolSlot>
          <Copilot id="sb" />
        </ToolIcons>
      </Toolbar>

      <Favorites>
        <Favorite $w={36} $gap={0}><Stack /></Favorite>
        <Divider $after={13} />
        <Favorite $w={152} $gap={6}><ImportFolder /><Label $track={-0.4}>Import favorites</Label></Favorite>
        <Divider $after={19} />
        <Favorite $w={86} $gap={9}><Gmail /><Label $track={-0.4}>Gmail</Label></Favorite>
        <Favorite $w={108} $gap={7}><YouTube w={20} /><Label $track={-0.6}>YouTube</Label></Favorite>
        <Favorite $w={83} $gap={10}><MapsPin /><Label $track={-0.4}>Maps</Label></Favorite>
        <Favorite $w={187} $gap={7}><Meet /><Label $track={-0.14}>Meet – ksp-nvoc-vdu</Label></Favorite>
        <Favorite $w={197} $gap={8}><Arxiv /><Label $track={-0.31}>arXiv.org e-Print arc...</Label></Favorite>
        <Favorite $w={73} $gap={10}><Lens s={13} c="#1373d6" w={2} /><Label $track={-0.4}>Bing</Label></Favorite>
        <Favorite $w={80} $gap={8}><Globe /><Label $track={-0.2}>MSN</Label></Favorite>
      </Favorites>

      <PageFrame>
        <Page>
          <Decoration />
          <PageHeader><Deploy>Deploy</Deploy><Kebab /></PageHeader>
          <PageBody>
            <Column>
              <ImageCard>entry and processing time.</ImageCard>
              <Caption>Uploaded Image</Caption>
              <Success><CheckEmoji /><span>Extraction Completed!</span></Success>
              <Heading>Extracted Text:</Heading>
              <CodeBlock><Code>{extracted}</Code></CodeBlock>
            </Column>
            <ScrollRail><ScrollThumb /><ScrollDown /></ScrollRail>
          </PageBody>
        </Page>
      </PageFrame>

      <Taskbar>
        <WidgetSlot><Widgets /></WidgetSlot>
        <Windows />
        <SearchBox><Lens s={19} c="#e8e8e8" w={1.5} /><Label $size={17} $track={-0.2} $color="#cfcccb">Search</Label></SearchBox>
        <AppRow>
          {apps.map((app, i) => (
            <AppCell key={i} $active={app.active}>
              {app.icon}
              {(app.running || app.active) && <Indicator $active={app.active} />}
              {app.badge}
            </AppCell>
          ))}
        </AppRow>
        <Tray>
          <TraySlot $w={28}><Chevron /></TraySlot>
          <TraySlot $w={51}><CloudInfo /></TraySlot>
          <TraySlot $w={30}><Wifi /></TraySlot>
          <TraySlot $w={29}><Mute /></TraySlot>
          <TraySlot $w={32}><Battery /></TraySlot>
          <Clock><Label $size={14.8} $track={-0.1}>3:16 PM</Label><Label $size={14.8} $track={-0.1}>8/7/2025</Label></Clock>
          <Bell />
        </Tray>
      </Taskbar>
    </Screen>
  );
}
